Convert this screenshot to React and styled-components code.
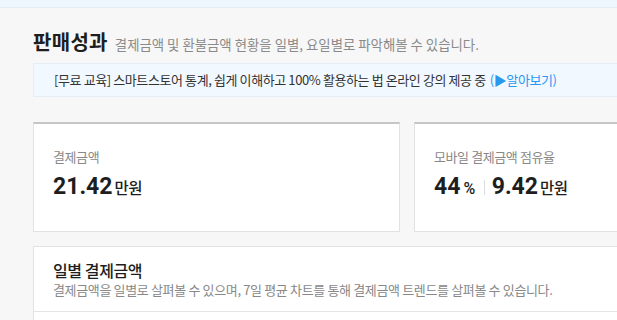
import React from "react";
import styled, { createGlobalStyle } from "styled-components";

const Global = createGlobalStyle`
  html, body { margin: 0; padding: 0; }
  body {
    background: #f7f7f7;
    font-family: "Noto Sans CJK KR", "Noto Sans", sans-serif;
    color: #222;
    overflow: hidden;
  }
`;

const Page = styled.div`
  width: 617px;
  height: 320px;
  overflow: hidden;
  background: #f7f7f7;
`;

const TopBar = styled.div`
  height: 7px;
  background: #eef6fe;
  border-bottom: 1px solid #e2edf8;
`;

const Content = styled.div`
  padding: 0 0 0 33px;
  width: 780px;
`;

const Header = styled.div`
  display: flex;
  align-items: baseline;
  gap: 7px;
  padding-top: 21px;
  height: 25px;
`;

const Title = styled.h1`
  margin: 0;
  font-size: 20px;
  line-height: 25px;
  font-weight: 700;
  letter-spacing: 0.3px;
  color: #1e1e1e;
`;

const Subtitle = styled.span`
  font-size: 13.4px;
  color: #8a8a8a;
  letter-spacing: 0;
`;

const Notice = styled.div`
  margin-top: 9px;
  height: 32px;
  line-height: 32px;
  background: #f2f8ff;
  border: 1px solid #e4eef9;
  padding-left: 20px;
  font-size: 13px;
  color: #333;
  letter-spacing: -0.4px;
`;

const NoticeLink = styled.a`
  color: #2a97ef;
  text-decoration: none;
  margin-left: 4px;
`;

const Cards = styled.div`
  display: grid;
  grid-template-columns: 367px 367px;
  gap: 14px;
  margin-top: 25px;
`;

const Card = styled.div`
  background: #fff;
  border: 1px solid #e2e2e2;
  border-top: 2px solid #c5c7c7;
  box-sizing: content-box;
  padding: 24px 0 0 19px;
  height: 83px;
`;

const Label = styled.div`
  font-size: 13px;
  line-height: 18px;
  color: #888;
  letter-spacing: -0.4px;
`;

const ValueRow = styled.div`
  display: flex;
  align-items: baseline;
  margin-top: 7px;
  height: 28px;
`;

const Num = styled.span`
  font-family: Roboto, "Noto Sans", sans-serif;
  font-size: 23px;
  font-weight: 700;
  line-height: 28px;
  color: #1e1e1e;
  letter-spacing: 0;
`;

const Unit = styled.span`
  font-size: ${(p) => (p.$pct ? "16px" : "15.5px")};
  font-weight: 500;
  color: #1e1e1e;
  margin-left: ${(p) => (p.$pct ? "3px" : "2px")};
  letter-spacing: -0.5px;
  font-family: ${(p) =>
    p.$pct ? 'Roboto, "Noto Sans", sans-serif' : '"Noto Sans CJK KR", sans-serif'};
`;

const Divider = styled.span`
  display: inline-block;
  width: 1px;
  height: 15px;
  background: #dcdcdc;
  margin: 0 7px 0 9px;
  align-self: center;
`;

const Section = styled.div`
  margin-top: 14px;
  background: #fff;
  border: 1px solid #e2e2e2;
  height: 200px;
`;

const SectionHead = styled.div`
  padding: 12px 0 12px 19px;
  border-bottom: 1px solid #e4e4e4;
`;

const SectionTitle = styled.h2`
  margin: 0;
  font-size: 16px;
  line-height: 22px;
  font-weight: 500;
  color: #1e1e1e;
  letter-spacing: -0.4px;
`;

const SectionDesc = styled.p`
  margin: 0;
  font-size: 13px;
  line-height: 18px;
  color: #888;
  letter-spacing: -0.35px;
`;

export default function App() {
  return (
    <Page>
      <Global />
      <TopBar />
      <Content>
        <Header>
          <Title>판매성과</Title>
          <Subtitle>결제금액 및 환불금액 현황을 일별, 요일별로 파악해볼 수 있습니다.</Subtitle>
        </Header>
        <Notice>
          [무료 교육] 스마트스토어 통계, 쉽게 이해하고 100% 활용하는 법 온라인 강의 제공 중
          <NoticeLink>(▶알아보기)</NoticeLink>
        </Notice>
        <Cards>
          <Card>
            <Label>결제금액</Label>
            <ValueRow>
              <Num>21.42</Num>
              <Unit>만원</Unit>
            </ValueRow>
          </Card>
          <Card>
            <Label>모바일 결제금액 점유율</Label>
            <ValueRow>
              <Num>44</Num>
              <Unit $pct>%</Unit>
              <Divider />
              <Num>9.42</Num>
              <Unit>만원</Unit>
            </ValueRow>
          </Card>
        </Cards>
        <Section>
          <SectionHead>
            <SectionTitle>일별 결제금액</SectionTitle>
            <SectionDesc>
              결제금액을 일별로 살펴볼 수 있으며, 7일 평균 차트를 통해 결제금액 트렌드를 살펴볼 수 있습니다.
            </SectionDesc>
          </SectionHead>
        </Section>
      </Content>
    </Page>
  );
}
